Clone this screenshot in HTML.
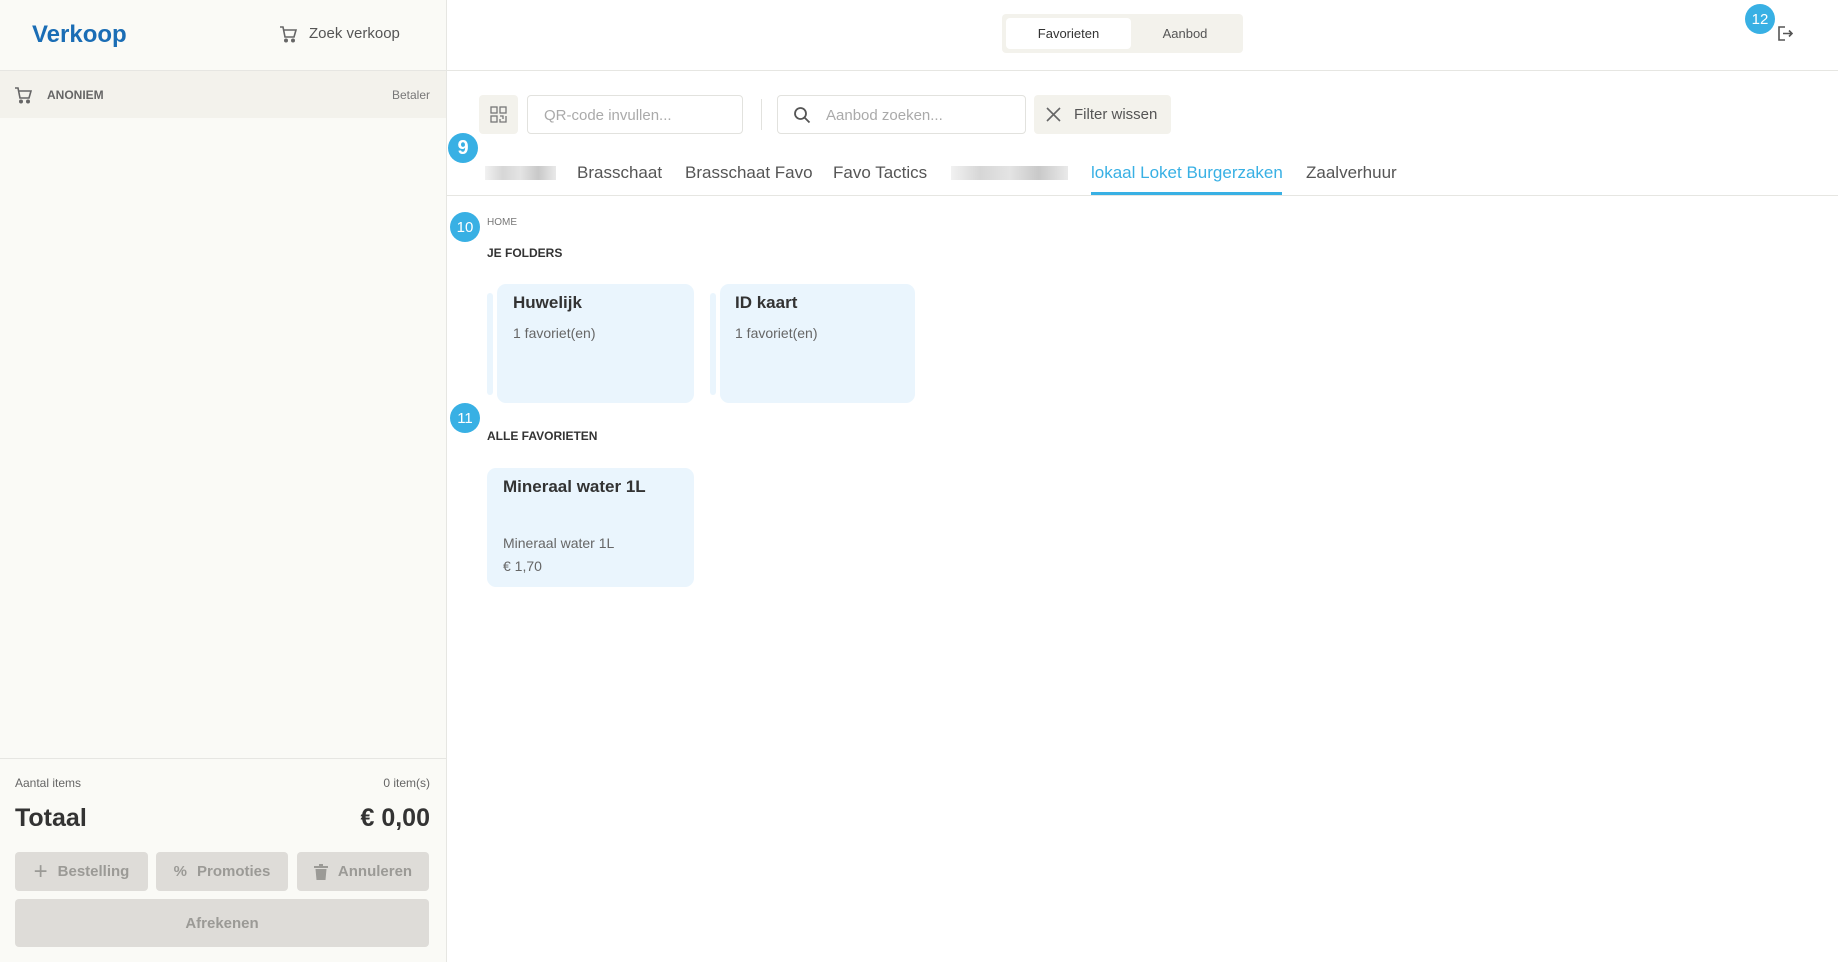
<!DOCTYPE html>
<html><head><meta charset="utf-8"><style>
*{box-sizing:border-box;margin:0;padding:0}
body{width:1838px;height:962px;overflow:hidden;background:#fff;font-family:"Liberation Sans",sans-serif;color:#333;position:relative}
.a{position:absolute}
.side{left:0;top:0;width:447px;height:962px;background:#fafaf6;border-right:1px solid #e6e6e2}
.badge{position:absolute;width:30px;height:30px;border-radius:50%;background:#38b0e4;color:#fff;font-size:17px;display:flex;align-items:center;justify-content:center}
.tab{position:absolute;top:163px;font-size:17px;color:#555}
.blur{position:absolute;height:14px;background:linear-gradient(90deg,#eee,#ccc,#ddd,#bbb,#e4e4e4);opacity:.8}
.card{position:absolute;background:#eaf5fd;border-radius:9px}
.strip{position:absolute;background:#eaf5fd;border-radius:4px;width:6px}
.ct{font-size:17px;font-weight:bold;color:#333}
.cs{font-size:14px;color:#666}
.btn{position:absolute;top:852px;height:39px;background:#dedcd8;border-radius:4px;color:#9b9a96;font-size:15px;font-weight:bold;display:flex;align-items:center;justify-content:center;gap:10px}
.r{text-align:right}
</style></head><body>
<div class="a side"></div>
<div class="a" style="left:0;top:70px;width:1838px;height:1px;background:#e6e6e2"></div>
<div class="a" style="left:32px;top:21px;font-size:24px;font-weight:bold;color:#1a6db5">Verkoop</div>
<svg class="a" style="left:279px;top:25px" width="18" height="18" viewBox="0 0 18 18" fill="none" stroke="#666" stroke-width="1.6"><path d="M1 2h3l2 10h9l2-7H5"/><circle cx="7" cy="15.5" r="1.2" fill="#666"/><circle cx="14" cy="15.5" r="1.2" fill="#666"/></svg>
<div class="a" style="left:309px;top:25px;font-size:15px;color:#555">Zoek verkoop</div>
<div class="a" style="left:0;top:71px;width:446px;height:47px;background:#f3f2ec"></div>
<svg class="a" style="left:14px;top:86px" width="18" height="18" viewBox="0 0 18 18" fill="none" stroke="#666" stroke-width="1.6"><path d="M1 2h3l2 10h9l2-7H5"/><circle cx="7" cy="15.5" r="1.2" fill="#666"/><circle cx="14" cy="15.5" r="1.2" fill="#666"/></svg>
<div class="a" style="left:47px;top:88px;font-size:12px;font-weight:bold;color:#666">ANONIEM</div>
<div class="a r" style="right:1408px;top:88px;font-size:12px;color:#777">Betaler</div>
<div class="a" style="left:0;top:758px;width:446px;height:1px;background:#e6e6e2"></div>
<div class="a" style="left:15px;top:776px;font-size:12px;color:#666">Aantal items</div>
<div class="a r" style="right:1408px;top:776px;font-size:12px;color:#666">0 item(s)</div>
<div class="a" style="left:15px;top:804px;font-size:25px;font-weight:bold;color:#333">Totaal</div>
<div class="a r" style="right:1408px;top:804px;font-size:25px;font-weight:bold;color:#333">€ 0,00</div>
<div class="btn" style="left:15px;width:133px"><span style="font-size:24px;font-weight:normal">+</span>Bestelling</div>
<div class="btn" style="left:156px;width:132px"><span>%</span>Promoties</div>
<div class="btn" style="left:297px;width:132px"><svg width="14" height="16" viewBox="0 0 14 16" fill="#9b9a96"><rect x="0" y="2" width="14" height="2"/><rect x="5" y="0" width="4" height="2"/><path d="M1.5 5h11l-1 11h-9z"/></svg>Annuleren</div>
<div class="btn" style="left:15px;top:899px;width:414px;height:48px">Afrekenen</div>

<div class="a" style="left:1002px;top:14px;width:241px;height:39px;background:#f3f2ec;border-radius:4px"></div>
<div class="a" style="left:1006px;top:18px;width:125px;height:31px;background:#fff;border-radius:4px;font-size:13px;color:#333;display:flex;align-items:center;justify-content:center">Favorieten</div>
<div class="a" style="left:1131px;top:18px;width:108px;height:31px;font-size:13px;color:#555;display:flex;align-items:center;justify-content:center">Aanbod</div>
<svg class="a" style="left:1777px;top:25px" width="16" height="17" viewBox="0 0 16 17" fill="none" stroke="#555" stroke-width="1.6"><path d="M8 2H2v13h6M6 8.5h9M12 5.5l3 3-3 3"/></svg>
<div class="badge" style="left:1745px;top:4px;font-size:15px">12</div>

<div class="a" style="left:479px;top:95px;width:39px;height:39px;background:#f3f2ec;border-radius:4px"></div>
<svg class="a" style="left:490px;top:106px" width="17" height="17" viewBox="0 0 17 17" fill="none" stroke="#777" stroke-width="1.3"><rect x="1" y="1" width="6" height="6"/><rect x="10" y="1" width="6" height="6"/><rect x="1" y="10" width="6" height="6"/><path d="M10 10h3v3M16 10v6h-6v-3"/></svg>
<div class="a" style="left:527px;top:95px;width:216px;height:39px;border:1px solid #e2e2de;border-radius:4px;font-size:15px;color:#aaa;padding:11px 16px">QR-code invullen...</div>
<div class="a" style="left:761px;top:99px;width:1px;height:31px;background:#e2e2de"></div>
<div class="a" style="left:777px;top:95px;width:249px;height:39px;border:1px solid #e2e2de;border-radius:4px;font-size:15px;color:#aaa;padding:11px 48px">Aanbod zoeken...</div>
<svg class="a" style="left:793px;top:106px" width="18" height="18" viewBox="0 0 18 18" fill="none" stroke="#555" stroke-width="1.8"><circle cx="7.5" cy="7.5" r="5.5"/><path d="M11.5 11.5l5 5"/></svg>
<div class="a" style="left:1034px;top:95px;width:137px;height:39px;background:#f3f2ec;border-radius:4px"></div>
<svg class="a" style="left:1046px;top:107px" width="15" height="15" viewBox="0 0 15 15" stroke="#666" stroke-width="1.6"><path d="M1 1l13 13M14 1L1 14"/></svg>
<div class="a" style="left:1074px;top:106px;font-size:15px;color:#555">Filter wissen</div>

<div class="blur" style="left:485px;top:166px;width:71px"></div>
<div class="tab" style="left:577px">Brasschaat</div>
<div class="tab" style="left:685px">Brasschaat Favo</div>
<div class="tab" style="left:833px">Favo Tactics</div>
<div class="blur" style="left:951px;top:166px;width:117px"></div>
<div class="tab" style="left:1091px;color:#38b0e4">lokaal Loket Burgerzaken</div>
<div class="tab" style="left:1306px">Zaalverhuur</div>
<div class="a" style="left:447px;top:195px;width:1391px;height:1px;background:#e6e6e2"></div>
<div class="a" style="left:1091px;top:192px;width:191px;height:3px;background:#38b0e4"></div>
<div class="badge" style="left:448px;top:133px;font-size:20px;font-weight:bold">9</div>

<div class="badge" style="left:450px;top:212px;font-size:15px">10</div>
<div class="a" style="left:487px;top:217px;font-size:10px;color:#777">HOME</div>
<div class="a" style="left:487px;top:246px;font-size:12px;font-weight:bold;color:#333">JE FOLDERS</div>
<div class="strip" style="left:487px;top:293px;height:102px"></div>
<div class="card" style="left:497px;top:284px;width:197px;height:119px;padding:9px 16px"><div class="ct">Huwelijk</div><div class="cs" style="margin-top:12px">1 favoriet(en)</div></div>
<div class="strip" style="left:710px;top:293px;height:102px"></div>
<div class="card" style="left:720px;top:284px;width:195px;height:119px;padding:9px 15px"><div class="ct">ID kaart</div><div class="cs" style="margin-top:12px">1 favoriet(en)</div></div>
<div class="badge" style="left:450px;top:403px;font-size:15px">11</div>
<div class="a" style="left:487px;top:429px;font-size:12px;font-weight:bold;color:#333">ALLE FAVORIETEN</div>
<div class="card" style="left:487px;top:468px;width:207px;height:119px;padding:9px 16px"><div class="ct">Mineraal water 1L</div><div class="cs" style="margin-top:38px">Mineraal water 1L</div><div class="cs" style="margin-top:7px">€ 1,70</div></div>
</body></html>
